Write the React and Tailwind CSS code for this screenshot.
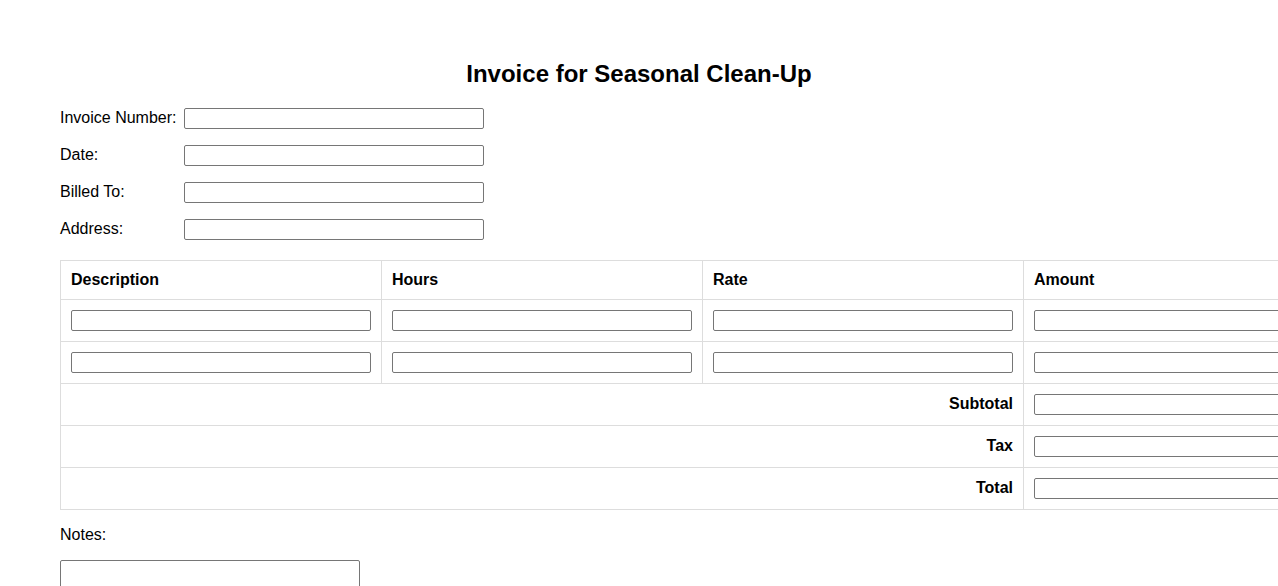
import React from "react";

const fieldRows = ["Invoice Number:", "Date:", "Billed To:", "Address:"];
const columns = ["Description", "Hours", "Rate", "Amount"];
const totals = ["Subtotal", "Tax", "Total"];

const Field = () => (
  <input
    type="text"
    className="block w-[300px] h-[21px] border border-[#767676] rounded-[2px] bg-white px-[2px] text-[13px] outline-none"
  />
);

const App = () => {
  return (
    <div
      className="h-screen overflow-hidden bg-white text-black"
      style={{ fontFamily: '"Liberation Sans", Arial, sans-serif' }}
    >
      <div className="px-[60px] pt-[60px]">
        <h1 className="text-center text-[24px] font-bold leading-[28px]">
          Invoice for Seasonal Clean-Up
        </h1>

        {/* header fields */}
        <div className="mt-[20px] flex flex-col gap-[16px]">
          {fieldRows.map((label) => (
            <div key={label} className="flex items-center h-[21px]">
              <label className="w-[124px] text-[16px] leading-[18px] mb-[2px]">{label}</label>
              <Field />
            </div>
          ))}
        </div>

        {/* line items */}
        <table className="mt-[20px] border-collapse text-[16px]">
          <thead>
            <tr>
              {columns.map((c) => (
                <th
                  key={c}
                  className="border border-[#dddddd] p-[10px] text-left font-bold leading-[18px]"
                >
                  {c}
                </th>
              ))}
            </tr>
          </thead>
          <tbody>
            {[0, 1].map((r) => (
              <tr key={r}>
                {columns.map((c) => (
                  <td key={c} className="border border-[#dddddd] p-[10px]">
                    <Field />
                  </td>
                ))}
              </tr>
            ))}
            {totals.map((t) => (
              <tr key={t}>
                <td
                  colSpan={3}
                  className="border border-[#dddddd] px-[10px] pt-[9px] pb-[11px] text-right font-bold leading-[21px]"
                >
                  {t}
                </td>
                <td className="border border-[#dddddd] p-[10px]">
                  <Field />
                </td>
              </tr>
            ))}
          </tbody>
        </table>

        {/* notes */}
        <div className="mt-[16px] text-[16px] leading-[18px]">Notes:</div>
        <textarea className="mt-[16px] block w-[300px] h-[60px] border border-[#767676] rounded-[2px] bg-white resize-none outline-none" />
      </div>
    </div>
  );
};

export default App;
